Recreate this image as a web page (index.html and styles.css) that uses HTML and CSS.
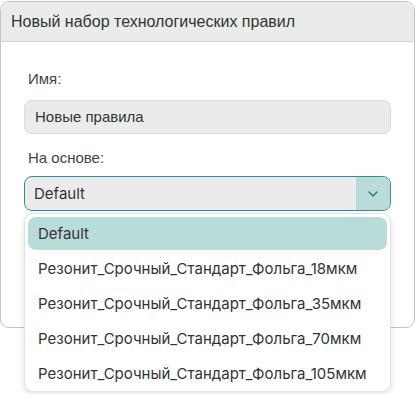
FILE: index.html
```html
<!DOCTYPE html>
<html lang="ru">
<head>
    <meta charset="UTF-8">
    <meta name="viewport" content="width=device-width, initial-scale=1.0">
    <title>Новый набор технологических правил</title>
    <link rel="stylesheet" href="styles.css">
</head>
<body>

    <div class="dialog">

        <div class="dialog-header">Новый набор технологических правил</div>

        <div class="dialog-body">

            <div class="field-label">Имя:</div>
            <div class="text-input">Новые правила</div>

            <div class="field-label">На основе:</div>

            <div class="select-wrap">
                <div class="select">
                    <span class="select-value">Default</span>
                    <span class="select-btn">
                        <svg width="10" height="6" viewBox="0 0 10 6">
                            <path d="M1 1 L5 5 L9 1" fill="none" stroke="#217a78" stroke-width="1.4" stroke-linecap="round" stroke-linejoin="round"/>
                        </svg>
                    </span>
                </div>

                <div class="dropdown">
                    <div class="option active">Default</div>
                    <div class="option">Резонит_Срочный_Стандарт_Фольга_18мкм</div>
                    <div class="option">Резонит_Срочный_Стандарт_Фольга_35мкм</div>
                    <div class="option">Резонит_Срочный_Стандарт_Фольга_70мкм</div>
                    <div class="option">Резонит_Срочный_Стандарт_Фольга_105мкм</div>
                </div>
            </div>

        </div>

    </div>

</body>
</html>
```

FILE: styles.css
```css
html, body{
    height: 394px;
}

body{
    margin: 0px;
    background: white;
    font-family: "Liberation Sans", Arial, sans-serif;
    color: #333;
}

.dialog{
    box-sizing: border-box;
    width: 415px;
    height: 327px;
    margin-top: 1px;
    border: 1px solid #c4c4c4;
    border-radius: 9px;
    background: white;
}

.dialog-header{
    height: 39px;
    line-height: 39px;
    padding-left: 10px;
    font-size: 16px;
    color: #333;
    background: #eaeceb;
    border-bottom: 1px solid #cfd8d8;
    border-radius: 8px 8px 0 0;
}

.dialog-body{
    padding: 28px 23px 0 23px;
}

.field-label{
    font-size: 15px;
    line-height: 17px;
    padding-left: 4px;
    color: #444;
}

.text-input{
    box-sizing: border-box;
    height: 34px;
    margin: 13px 0 15px 0;
    padding-left: 10px;
    line-height: 32px;
    font-size: 15px;
    background: #eaeceb;
    border: 1px solid #d6dcdb;
    border-radius: 8px;
}

.select-wrap{
    position: relative;
    margin-top: 10px;
}

.select{
    box-sizing: border-box;
    display: flex;
    height: 35px;
    border: 1px solid #2e928d;
    border-radius: 8px;
    background: #eaeceb;
    overflow: hidden;
}

.select-value{
    flex: 1;
    padding-left: 9px;
    line-height: 33px;
    font-family: Inter, sans-serif;
    font-size: 15px;
    color: #333;
}

.select-btn{
    width: 34px;
    display: flex;
    align-items: center;
    justify-content: center;
    background: #b9dcd9;
}

.dropdown{
    position: absolute;
    z-index: 10;
    top: 37px;
    left: 0;
    right: 0;
    box-sizing: border-box;
    padding: 3px 3px 1px 3px;
    background: white;
    border: 1px solid #e2e2e2;
    border-radius: 9px;
    box-shadow: 0 2px 6px rgba(0, 0, 0, 0.12);
    display: flex;
    flex-direction: column;
    gap: 2px;
}

.option{
    height: 33px;
    line-height: 33px;
    padding-left: 10px;
    font-family: Inter, sans-serif;
    font-size: 15px;
    color: #333;
    border-radius: 8px;
}

.option.active{
    background: #b9dcd9;
}
```
